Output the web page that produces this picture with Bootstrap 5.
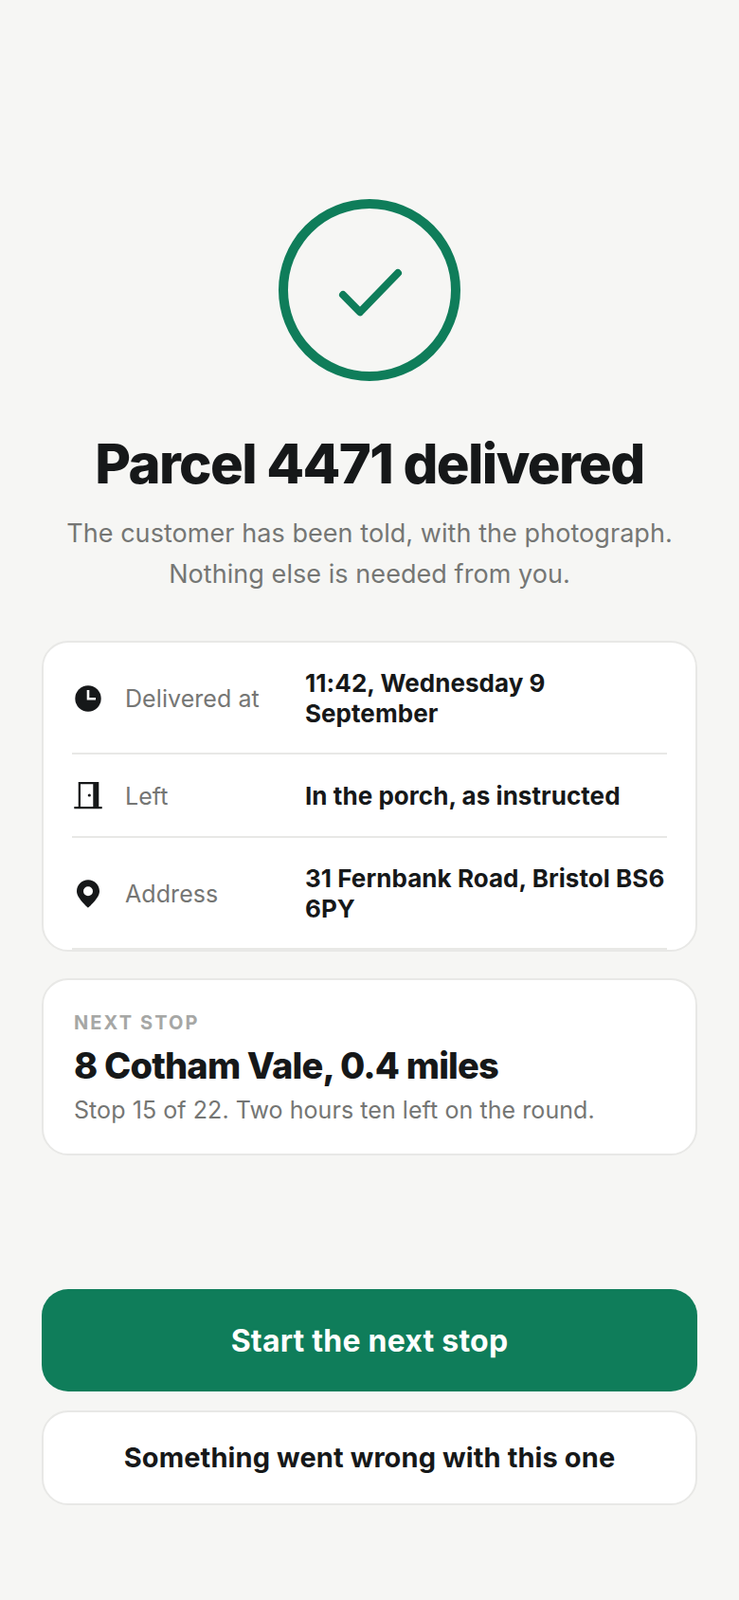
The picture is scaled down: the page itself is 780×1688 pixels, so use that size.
<!DOCTYPE html>
<html lang="en"><head><meta charset="utf-8">
<link href="https://cdn.jsdelivr.net/npm/bootstrap@5.3.0/dist/css/bootstrap.min.css" rel="stylesheet">
<style>
body{background:#f6f6f4;font-family:Inter,"Liberation Sans",sans-serif;color:#161819}
.screen{height:100vh;padding:210px 44px 100px}
.tick-ring{width:192px;height:192px}
.ttl{font-size:58px;font-weight:800;letter-spacing:-1.6px;line-height:68px;margin:53px 0 0}
.subt{font-size:27px;line-height:42.500px;color:#757674;margin:19px 0 0;letter-spacing:.06px}
.panel{background:#fff;border:2px solid #e8e8e6;border-radius:28px}
.facts{margin-top:49px;padding:0 30px}
.fact{border-bottom:2px solid #e8e8e6;display:flex;align-items:center;padding:27px 0 25px}
.fact-ic{width:34px;height:34px;flex:none;margin-right:20px}
.fact-k{font-size:25px;line-height:32px;color:#757674;width:190px;flex:none;letter-spacing:.07px;margin-left:2px}
.fact-v{font-size:26px;font-weight:700;line-height:32px;letter-spacing:.05px}
.nxt{margin-top:28px;padding:33px 32px 30px}
.nxt-k{font-size:20px;font-weight:700;letter-spacing:2.1px;color:#a6a7a5;line-height:24px}
.nxt-t{font-size:38px;font-weight:800;letter-spacing:-.8px;line-height:48px;margin-top:9px}
.nxt-s{font-size:25px;color:#757674;line-height:32px;margin-top:7px;letter-spacing:.07px}
.act{display:block;width:100%;font-weight:700}
.act-main{background:#0f7d5a;color:#fff;border:0;border-radius:28px;height:108px;font-size:32px;letter-spacing:.22px;padding-top:8px}
.act-alt{background:#fff;color:#161819;border:2px solid #e8e8e6;border-radius:28px;height:100px;font-size:29px;margin-top:20px;letter-spacing:.1px}
</style></head><body>
<div class="screen d-flex flex-column">
<div class="text-center">
<svg class="tick-ring d-block mx-auto" viewBox="0 0 192 192" fill="none" stroke="#0f7d5a"><circle cx="96" cy="96" r="91" stroke-width="10"/><path d="M68 101l18 18.300L126 78" stroke-width="8" stroke-linecap="round" stroke-linejoin="round"/></svg>
<h1 class="ttl">Parcel 4471 delivered</h1>
<p class="subt">The customer has been told, with the photograph.<br>Nothing else is needed from you.</p>
</div>
<div class="panel facts">
<div class="fact"><svg class="fact-ic" viewBox="0 0 34 34"><circle cx="17" cy="17" r="13.700" fill="#161819"/><path d="M17 8v9.300h8" fill="none" stroke="#fff" stroke-width="2.600"/></svg><div class="fact-k">Delivered at</div><div class="fact-v">11:42, Wednesday 9 September</div></div>
<div class="fact"><svg class="fact-ic" viewBox="0 0 34 34"><path fill="#161819" fill-rule="evenodd" d="M6.700 2h21.600v26h3.400v2.200H2.300V28h4.400V2zm2.300 2.200V28h13.300V4.200H9z"/><circle cx="18.300" cy="16" r="1.600" fill="#161819"/></svg><div class="fact-k">Left</div><div class="fact-v">In the porch, as instructed</div></div>
<div class="fact"><svg class="fact-ic" viewBox="0 0 34 34"><path fill="#161819" fill-rule="evenodd" d="M17 2.300c-6.600 0-12 5.300-12 12 0 7.500 12 17.400 12 17.400s12-9.900 12-17.400c0-6.700-5.400-12-12-12zm0 7a5 5 0 110 10 5 5 0 010-10z"/></svg><div class="fact-k">Address</div><div class="fact-v">31 Fernbank Road, Bristol BS6 6PY</div></div>
</div>
<div class="panel nxt">
<div class="nxt-k">NEXT STOP</div>
<div class="nxt-t">8 Cotham Vale, 0.4 miles</div>
<div class="nxt-s">Stop 15 of 22. Two hours ten left on the round.</div>
</div>
<div class="mt-auto">
<button class="btn act act-main" type="button">Start the next stop</button>
<button class="btn act act-alt" type="button">Something went wrong with this one</button>
</div>
</div>
<script src="https://cdn.jsdelivr.net/npm/bootstrap@5.3.0/dist/js/bootstrap.bundle.min.js"></script>
</body></html>
